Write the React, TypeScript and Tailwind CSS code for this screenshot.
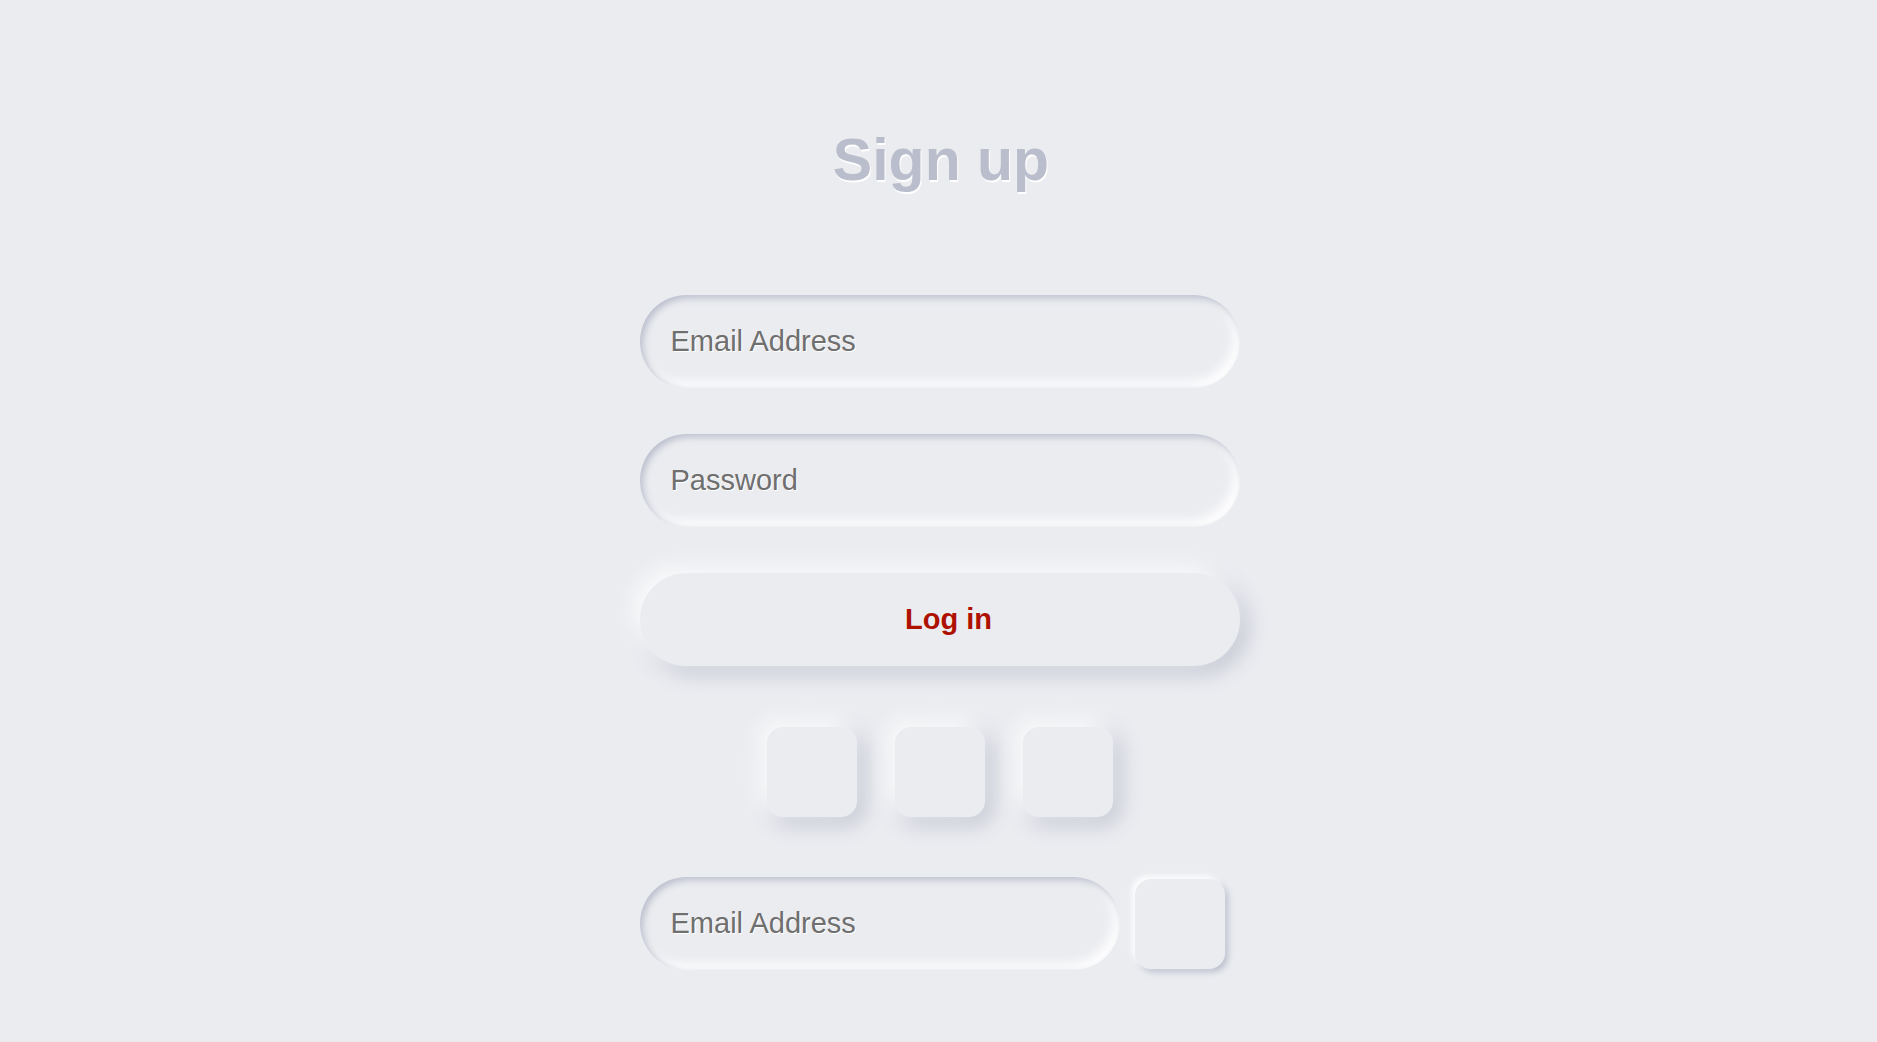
import React from 'react';

const inset =
  'shadow-[inset_3px_3px_7px_#babecc,inset_-6px_-6px_12px_#ffffff]';
const raised = 'shadow-[-6px_-6px_22px_#ffffff,6px_6px_22px_#babecc]';

const Field: React.FC<{ placeholder: string; type?: string; width: string }> = ({
  placeholder,
  type = 'text',
  width,
}) => (
  <input
    type={type}
    placeholder={placeholder}
    className={`${width} h-[93px] rounded-full bg-[#ebecf0] pl-[31px] pr-6 text-[29px] text-[#333] placeholder:text-[#6f6f6f] outline-none [text-shadow:1px_1px_0_#ffffff] ${inset}`}
  />
);

export default function App() {
  return (
    <div className="min-h-screen w-full bg-[#ebecf0] font-['Liberation_Sans',Arial,sans-serif] [text-shadow:1px_1px_0_#ffffff]">
      <div className="flex flex-col items-center pt-[131px] pb-[72px] pl-[2px]">
        <h1 className="h-[60px] pl-[3px] text-[59px] font-bold leading-none text-[#babecc] [text-shadow:1px_2px_1px_#ffffff]">
          Sign up
        </h1>

        <div className="mt-[104px]">
          <Field placeholder="Email Address" width="w-[600px]" />
        </div>
        <div className="mt-[46px]">
          <Field placeholder="Password" type="password" width="w-[600px]" />
        </div>

        <button
          className={`mt-[46px] h-[93px] w-[600px] rounded-full bg-[#ebecf0] pl-[18px] text-[29px] font-bold text-[#ae1100] ${raised}`}
        >
          Log in
        </button>

        <div className="mt-[61px] flex gap-[38px]">
          <button className={`h-[90px] w-[90px] rounded-[16px] bg-[#ebecf0] ${raised}`} />
          <button className={`h-[90px] w-[90px] rounded-[16px] bg-[#ebecf0] ${raised}`} />
          <button className={`h-[90px] w-[90px] rounded-[16px] bg-[#ebecf0] ${raised}`} />
        </div>

        <div className="mt-[60px] flex w-[600px] items-center">
          <Field placeholder="Email Address" width="w-[480px]" />
          <button className="ml-[15px] h-[90px] w-[90px] rounded-[16px] bg-[#ebecf0] shadow-[-3px_-3px_6px_#ffffff,3px_3px_6px_#babecc]" />
        </div>
      </div>
    </div>
  );
}
